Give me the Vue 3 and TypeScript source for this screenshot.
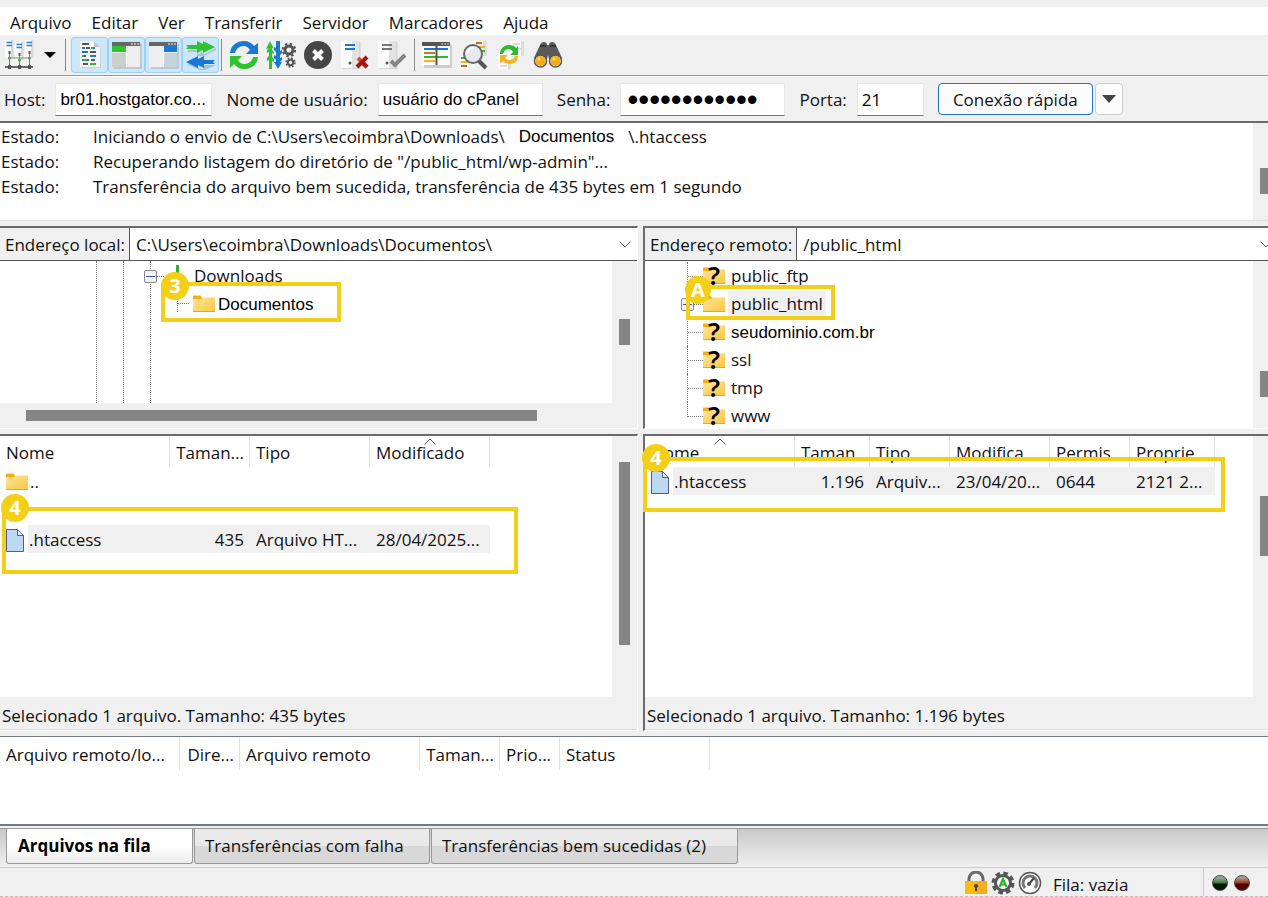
<script setup lang="ts">
import { ref } from 'vue'

interface Column { label: string; width: number; align?: 'right'; sorted?: boolean }
interface FileRow { kind: 'folder' | 'file' | 'gap'; cells: string[] }

const menus = ['Arquivo', 'Editar', 'Ver', 'Transferir', 'Servidor', 'Marcadores', 'Ajuda']

const host = ref('br01.hostgator.co...')
const user = ref('usuário do cPanel')
const password = ref('abcdefghijkl')
const port = ref('21')

const localPath = ref('C:\\Users\\ecoimbra\\Downloads\\Documentos\\')
const remotePath = ref('/public_html')

const localColumns: Column[] = [
  { label: 'Nome', width: 170 },
  { label: 'Taman...', width: 80, align: 'right' },
  { label: 'Tipo', width: 120 },
  { label: 'Modificado', width: 120, sorted: true },
]
const localRows: FileRow[] = [
  { kind: 'folder', cells: ['..', '', '', ''] },
  { kind: 'gap', cells: [] },
  { kind: 'file', cells: ['.htaccess', '435', 'Arquivo HT...', '28/04/2025...'] },
]
const remoteColumns: Column[] = [
  { label: 'Nome', width: 150, sorted: true },
  { label: 'Taman', width: 75 },
  { label: 'Tipo', width: 80 },
  { label: 'Modifica', width: 100 },
  { label: 'Permis', width: 80 },
  { label: 'Proprie', width: 85 },
]
const remoteRow = ['.htaccess', '1.196', 'Arquiv...', '23/04/20...', '0644', '2121 2...']

const remoteFolders = [
  { name: 'public_ftp', unknown: true },
  { name: 'public_html', unknown: false },
  { name: 'seudominio.com.br', unknown: true, plain: true },
  { name: 'ssl', unknown: true },
  { name: 'tmp', unknown: true },
  { name: 'www', unknown: true },
]

const queueColumns: Column[] = [
  { label: 'Arquivo remoto/lo...', width: 180 },
  { label: 'Dire...', width: 60, align: 'right' },
  { label: 'Arquivo remoto', width: 180 },
  { label: 'Taman...', width: 80, align: 'right' },
  { label: 'Prio...', width: 60 },
  { label: 'Status', width: 150 },
]
const tabs = [
  { label: 'Arquivos na fila', width: 187 },
  { label: 'Transferências com falha', width: 236 },
  { label: 'Transferências bem sucedidas (2)', width: 307 },
]
const activeTab = ref(0)
const total = (columns: Column[]) => columns.reduce((sum, c) => sum + c.width, 0)
</script>

<template>
  <svg class="defs" aria-hidden="true">
    <defs>
      <linearGradient id="fold" x1="0" y1="0" x2="1" y2="1">
        <stop offset="0" stop-color="#ffe49a" /><stop offset="1" stop-color="#fbc840" />
      </linearGradient>
      <symbol id="folder" viewBox="0 0 22 18">
        <path d="M0 1.500Q0 .5 1 .5H7.500L9 3H21V10H0z" fill="#f6ae10" />
        <path d="M0 4H8L10 2.500H22V16.500H0z" fill="url(#fold)" />
        <path d="M0 16.500H22" stroke="#e2a62c" />
      </symbol>
      <symbol id="file" viewBox="0 0 18 23">
        <path d="M.5 .5H11.500L17.500 6.500V22.500H.5z" fill="#bcd9f1" stroke="#57598c" />
        <path d="M11.500 .5V6.500H17.500z" fill="#e6f1fb" stroke="#57598c" />
      </symbol>
      <symbol id="chevron" viewBox="0 0 12 7">
        <path d="M.5 .5L6 6L11.500 .5" fill="none" stroke="#555" />
      </symbol>
      <symbol id="sheet" viewBox="0 0 20 28">
        <path d="M0 0H18V27H0z" fill="#fafafa" /><path d="M11 0H18V27H11z" fill="#e2e2e2" />
        <path d="M18 1H19.500V28H1V27H18z" fill="#d4d4d4" />
      </symbol>
    </defs>
  </svg>

  <main class="app">
    <div class="top-edge"></div>
    <nav class="menu">
      <button v-for="m in menus" :key="m" type="button">{{ m }}</button>
    </nav>

    <div class="toolbar">
      <button class="tool" type="button" aria-label="Gerenciador de sites">
        <svg width="30" height="30" viewBox="0 0 30 30">
          <g v-for="x in [0, 10, 20]" :key="x" :transform="`translate(${x} ${x === 10 ? 2 : 0})`">
            <path d="M0 0H6V18H0z" fill="#fafafa" /><path d="M6 0H8.500V18H6z" fill="#d8d8d8" />
            <path d="M1.500 2.500H7M1.500 5.500H7" stroke="#2a80d0" stroke-width="1.500" />
            <path d="M4.500 11V14" stroke="#555" stroke-width="2" />
            <path d="M4.500 14V27" stroke="#777" />
            <circle cx="4.500" cy="18" r="1.500" fill="#48a048" />
          </g>
          <path d="M3 18H26" stroke="#888" /><path d="M0 27H28" stroke="#666" stroke-width="2" />
          <path d="M3 25H6V29H3zM13 25H16V29H13zM23 25H26V29H23z" fill="#555" />
        </svg>
      </button>
      <button class="drop" type="button" aria-label="Abrir lista de sites">
        <svg width="12" height="6" viewBox="0 0 12 6"><path d="M0 0H12L6 6z" /></svg>
      </button>
      <span class="sep"></span>
      <button class="tool on" type="button" aria-label="Registro de mensagens">
        <svg width="24" height="28" viewBox="0 0 24 28">
          <path d="M4 2L18 1L23 7V27H4z" fill="#c9d3d8" /><path d="M2 0H16L22 6V26H2z" fill="#f4f4f4" />
          <path d="M16 0V6H22z" fill="#c4c4c4" />
          <g stroke-width="2">
            <path d="M4 3H11M8 7H12M12 11H18M4 15H8M13 19H17M5 23H10" stroke="#555" />
            <path d="M4 7H7M14 7H17M4 11H10M12 15H18M4 19H11" stroke="#2377c8" />
            <path d="M13 7H15M5 19H9M12 23H18M4 15H6" stroke="#35b335" />
          </g>
        </svg>
      </button>
      <button class="tool on" type="button" aria-label="Árvore local">
        <svg width="30" height="28" viewBox="0 0 30 28">
          <path d="M2 3H30V28H2z" fill="#bac9d2" /><path d="M0 1H28V26H0z" fill="#eee" />
          <path d="M0 1H28V5H0z" fill="#666" /><path d="M19 3H21M22 3H24M25 3H27" stroke="#fff" />
          <path d="M0 5H14V11H0z" fill="#2fc32f" /><path d="M0 12H14V26H0z" fill="#ccd0cb" />
          <path d="M14.500 5V26" stroke="#fff" />
        </svg>
      </button>
      <button class="tool on" type="button" aria-label="Árvore remota">
        <svg width="30" height="28" viewBox="0 0 30 28">
          <path d="M2 3H30V28H2z" fill="#bac9d2" /><path d="M0 1H28V26H0z" fill="#eee" />
          <path d="M0 1H28V5H0z" fill="#666" /><path d="M19 3H21M22 3H24M25 3H27" stroke="#fff" />
          <path d="M15 5H28V11H15z" fill="#1978d4" /><path d="M15 12H28V26H15z" fill="#c6d3da" />
          <path d="M14.500 5V26" stroke="#fff" />
        </svg>
      </button>
      <button class="tool on" type="button" aria-label="Fila de transferência">
        <svg width="30" height="30" viewBox="0 0 30 30">
          <path d="M2 10H12V14.500L16 12L18 14.500L30 8V10L18 16L11 16V12H2zM30 25H17V29.500L2 23V25L17 31z" fill="#a9c0d0" />
          <path d="M0 5H11V1L17 4V1L29 7L17 13V10L11 13V9H0L2 7z" fill="#2fc32f" />
          <path d="M29 20H18V16L12 19V16L0 22L12 28V25L18 28V24H29L27 22z" fill="#1978d4" />
        </svg>
      </button>
      <span class="sep slim"></span>
      <button class="tool" type="button" aria-label="Atualizar">
        <svg width="30" height="30" viewBox="0 0 30 30">
          <path d="M1 13C2 5 8 1 15 1C19 1 23 3 25 6L29 3V14H17L21 10C19 7 17 6 15 6C10 6 7 9 6 13z" fill="#1978d4" />
          <path d="M29 17C28 25 22 29 15 29C11 29 7 27 5 24L1 28V16H13L9 20C11 23 13 24 15 24C20 24 23 21 24 17z" fill="#2fc32f" />
        </svg>
      </button>
      <button class="tool" type="button" aria-label="Processar fila">
        <svg width="30" height="30" viewBox="0 0 30 30">
          <path d="M3 29V20L1 21V18L3 16V12L1 13V10L3 8L0 9L4 1L8 9L6 8V10L8 12V14L6 13V17L8 19V22L6 21V29z" fill="#2fc32f" />
          <path d="M10 1H14V11L16 10V13L14 15V18L16 17V20L14 22H16L12 29L8 22H10V20L8 18V15L10 16V12L8 10V7L10 8z" fill="#1978d4" />
          <g fill="none" stroke="#555">
            <circle cx="23" cy="10" r="4" stroke-width="3" />
            <circle cx="23" cy="10" r="6.200" stroke-width="2.200" stroke-dasharray="2.400 2.470" />
            <circle cx="24.500" cy="22.500" r="2.700" stroke-width="2" />
            <circle cx="24.500" cy="22.500" r="4.300" stroke-width="1.800" stroke-dasharray="1.700 1.680" />
          </g>
        </svg>
      </button>
      <button class="tool" type="button" aria-label="Cancelar">
        <svg width="30" height="30" viewBox="0 0 30 30">
          <circle cx="15" cy="15" r="14" fill="#464646" />
          <path d="M10.500 10.500L19.500 19.500M19.500 10.500L10.500 19.500" stroke="#fff" stroke-width="4" />
        </svg>
      </button>
      <button class="tool" type="button" aria-label="Desconectar">
        <svg width="30" height="30" viewBox="0 0 30 30">
          <use href="#sheet" x="1" y="1" width="20" height="28" />
          <path d="M5 5H15M5 9H15" stroke="#1978d4" stroke-width="2" /><circle cx="10" cy="23" r="1.500" fill="#555" />
          <path d="M18 18L27 27" stroke="#e04b18" stroke-width="4" /><path d="M27 17L17 27M23 23L27 27" stroke="#a51212" stroke-width="4" />
        </svg>
      </button>
      <button class="tool" type="button" aria-label="Reconectar">
        <svg width="30" height="30" viewBox="0 0 30 30">
          <use href="#sheet" x="1" y="1" width="20" height="28" />
          <path d="M5 5H15M5 9H15" stroke="#777" stroke-width="2" /><circle cx="10" cy="23" r="1.500" fill="#555" />
          <path d="M14 21L18 25L28 15" fill="none" stroke="#858585" stroke-width="4" />
        </svg>
      </button>
      <span class="sep mid"></span>
      <button class="tool" type="button" aria-label="Comparar diretórios">
        <svg width="30" height="26" viewBox="0 0 30 26">
          <path d="M2 3H30V26H2z" fill="#ccc" /><path d="M0 0H28V23H0z" fill="#fafafa" />
          <path d="M0 0H28V4H0z" fill="#555" /><path d="M19 2H21M22 2H24M25 2H27" stroke="#ddd" />
          <g stroke-width="2">
            <path d="M2 7H26" stroke="#1978d4" /><path d="M2 11H13" stroke="#c87730" />
            <path d="M2 15H26" stroke="#2fb92f" /><path d="M2 19H13" stroke="#f3b51b" />
          </g>
          <path d="M14.500 4V23" stroke="#555" stroke-width="2" />
        </svg>
      </button>
      <button class="tool" type="button" aria-label="Filtros">
        <svg width="30" height="30" viewBox="0 0 30 30">
          <path d="M12 1H26V16H12zM2 14H16V29H2z" fill="#fafafa" /><path d="M24 1H28V16H24z" fill="#ddd" />
          <g stroke-width="2">
            <path d="M17 3H23M2 26H8" stroke="#c8682c" /><path d="M19 7H26M2 22H12" stroke="#f3b51b" />
            <path d="M20 11H26M2 18H7" stroke="#2fb92f" />
          </g>
          <path d="M20 21L27 28" stroke="#555" stroke-width="4" />
          <circle cx="14" cy="14" r="9" fill="#e6eaee" stroke="#686868" stroke-width="2" />
          <path d="M8 13C9 9 12 8 15 8" fill="none" stroke="#fff" stroke-width="2" />
        </svg>
      </button>
      <button class="tool" type="button" aria-label="Navegação sincronizada">
        <svg width="30" height="30" viewBox="0 0 30 30">
          <path d="M14 1H26V16H14zM2 13H15V29H2z" fill="#fcfcfc" /><path d="M25 1H28V16H25zM12 22H15V29H12z" fill="#ddd" />
          <path d="M17 4H24M21 9H25M4 22H11M4 26H11" stroke="#bbb" />
          <path d="M4 14C4 8 9 5 13 5C16 5 19 6 20 8L22 6V15H14L17 12C15 9 13 9 12 9C9 9 8 12 7 14z" fill="#2fb92f" />
          <path d="M22 16C22 21 18 24 14 24C11 24 8 23 7 21L4 23V15H12L9 18C11 20 13 20 14 20C17 20 18 18 19 16z" fill="#f3b51b" />
        </svg>
      </button>
      <button class="tool" type="button" aria-label="Procurar arquivos">
        <svg width="30" height="28" viewBox="0 0 30 28">
          <path d="M1 17L7 4Q8 1 11 1Q14 1 14 4H16Q16 1 19 1Q22 1 23 4L29 17V22H17L15 14L13 22H1z" fill="#5a5a5a" />
          <path d="M7 5H13M17 5H23" stroke="#393939" stroke-width="2" />
          <circle cx="7.500" cy="20" r="6" fill="#fff" stroke="#555" stroke-width="1.500" /><circle cx="22.500" cy="20" r="6" fill="#fff" stroke="#555" stroke-width="1.500" />
          <circle cx="7.500" cy="20" r="5" fill="#fba914" /><circle cx="22.500" cy="20" r="5" fill="#fba914" />
          <circle cx="6" cy="18" r="1.500" fill="#ffe069" /><circle cx="21" cy="18" r="1.500" fill="#ffe069" />
        </svg>
      </button>
    </div>

    <form class="quick" @submit.prevent>
      <label for="host">Host:</label>
      <input id="host" v-model="host" class="w-host" type="text" />
      <label for="user">Nome de usuário:</label>
      <input id="user" v-model="user" class="w-user" type="text" />
      <label for="password">Senha:</label>
      <input id="password" v-model="password" class="w-user dots" type="password" />
      <label for="port">Porta:</label>
      <input id="port" v-model="port" class="w-port ui" type="text" />
      <button class="connect" type="submit">Conexão rápida</button>
      <button class="connect-drop" type="button" aria-label="Conexões recentes">
        <svg width="14" height="8" viewBox="0 0 14 8"><path d="M0 0H14L7 8z" fill="#444" /></svg>
      </button>
    </form>

    <section class="log">
      <dl>
        <dt>Estado:</dt>
        <dd class="split-line"><span>Iniciando o envio de C:\Users\ecoimbra\Downloads\</span><span class="arial">Documentos</span><span>\.htaccess</span></dd>
        <dt>Estado:</dt>
        <dd>Recuperando listagem do diretório de "/public_html/wp-admin"...</dd>
        <dt>Estado:</dt>
        <dd>Transferência do arquivo bem sucedida, transferência de 435 bytes em 1 segundo</dd>
      </dl>
      <div class="track edge"><i class="log-thumb"></i></div>
    </section>

    <div class="columns trees">
      <section class="pane">
        <div class="address">
          <label for="local">Endereço local:</label>
          <div class="combo">
            <select id="local" v-model="localPath"><option>{{ localPath }}</option></select>
            <svg width="12" height="7"><use href="#chevron" /></svg>
          </div>
        </div>
        <div class="pane-body">
          <div class="tree local-tree">
            <div class="guides"><i></i><i></i><i></i></div>
            <div class="node">
              <span class="expander"></span><span class="stub"></span>
              <span class="download"></span><span>Downloads</span>
            </div>
            <div class="node child">
              <span class="stub tall"></span>
              <svg width="22" height="18"><use href="#folder" /></svg><span class="arial">Documentos</span>
            </div>
            <div class="mark mark-local-tree"><b>3</b></div>
          </div>
          <div class="track"><i class="tree-thumb"></i></div>
        </div>
        <div class="h-track"><i></i></div>
      </section>

      <section class="pane remote">
        <div class="address">
          <label for="remote">Endereço remoto:</label>
          <div class="combo cut">
            <select id="remote" v-model="remotePath"><option>{{ remotePath }}</option></select>
            <svg width="12" height="7"><use href="#chevron" /></svg>
          </div>
        </div>
        <div class="pane-body">
          <div class="tree remote-tree">
            <div v-for="f in remoteFolders" :key="f.name" class="node">
              <span class="branch"><span v-if="!f.unknown" class="expander"></span></span>
              <span class="folder-icon">
                <svg width="22" height="18"><use href="#folder" /></svg>
                <b v-if="f.unknown">?</b>
              </span>
              <span :class="{ arial: f.plain, picked: !f.unknown, name: true }">{{ f.name }}</span>
            </div>
            <div class="mark mark-remote-tree"><b>A</b></div>
          </div>
          <div class="track edge"><i class="remote-tree-thumb"></i></div>
        </div>
      </section>
    </div>

    <div class="columns lists">
      <section class="pane">
        <div class="pane-body">
          <div class="list">
            <table :style="{ width: total(localColumns) + 'px' }">
              <thead>
                <tr>
                  <th v-for="c in localColumns" :key="c.label" scope="col" :class="c.align" :style="{ width: c.width + 'px' }">
                    {{ c.label }}<svg v-if="c.sorted" class="sort" width="12" height="7"><use href="#chevron" /></svg>
                  </th>
                </tr>
              </thead>
              <tbody>
                <tr v-for="(r, i) in localRows" :key="i" :class="r.kind">
                  <td v-if="r.kind === 'gap'" colspan="4"></td>
                  <td v-for="(c, j) in r.cells" :key="j" :class="{ first: j === 0, right: j === 1 }">
                    <span v-if="j === 0" class="entry">
                      <svg v-if="r.kind === 'folder'" width="22" height="18"><use href="#folder" /></svg>
                      <svg v-else width="18" height="23"><use href="#file" /></svg>
                      <span>{{ c }}</span>
                    </span>
                    <template v-else>{{ c }}</template>
                  </td>
                </tr>
              </tbody>
            </table>
            <div class="mark mark-local-list"><b>4</b></div>
          </div>
          <div class="track"><i class="list-thumb"></i></div>
        </div>
        <p class="summary">Selecionado 1 arquivo. Tamanho: 435 bytes</p>
      </section>

      <section class="pane remote">
        <div class="pane-body">
          <div class="list">
            <table :style="{ width: total(remoteColumns) + 'px' }">
              <thead>
                <tr>
                  <th v-for="c in remoteColumns" :key="c.label" scope="col" :style="{ width: c.width + 'px' }">
                    {{ c.label }}<svg v-if="c.sorted" class="sort" width="12" height="7"><use href="#chevron" /></svg>
                  </th>
                </tr>
              </thead>
              <tbody>
                <tr class="file">
                  <td v-for="(c, j) in remoteRow" :key="j" :class="{ first: j === 0, right: j === 1 }">
                    <span v-if="j === 0" class="entry"><svg width="18" height="23"><use href="#file" /></svg><span>{{ c }}</span></span>
                    <template v-else>{{ c }}</template>
                  </td>
                </tr>
              </tbody>
            </table>
            <div class="mark mark-remote-list"><b>4</b></div>
          </div>
          <div class="track edge"><i class="remote-list-thumb"></i></div>
        </div>
        <p class="summary">Selecionado 1 arquivo. Tamanho: 1.196 bytes</p>
      </section>
    </div>

    <section class="queue">
      <table :style="{ width: total(queueColumns) + 'px' }">
        <thead>
          <tr>
            <th v-for="c in queueColumns" :key="c.label" scope="col" :class="c.align" :style="{ width: c.width + 'px' }">{{ c.label }}</th>
          </tr>
        </thead>
      </table>
    </section>

    <div class="tabs" role="tablist">
      <button
        v-for="(t, i) in tabs" :key="t.label" type="button" role="tab"
        :aria-selected="i === activeTab" :class="{ active: i === activeTab }"
        :style="{ width: t.width + 'px' }" @click="activeTab = i"
      >{{ t.label }}</button>
    </div>

    <footer class="status">
      <svg width="24" height="24" viewBox="0 0 24 24">
        <path d="M5 12V8A7 7 0 0 1 19 8V12" fill="none" stroke="#6b6b6b" stroke-width="3" />
        <path d="M1 10H23V23H1z" fill="#f0ae20" /><path d="M1 10H12V23H1z" fill="#fdbd10" />
        <circle cx="12" cy="15" r="2" fill="#444" /><path d="M11 15H13V20H11z" fill="#444" />
      </svg>
      <svg width="24" height="24" viewBox="0 0 24 24">
        <circle cx="12" cy="12" r="9.500" fill="none" stroke="#555" stroke-width="4" stroke-dasharray="4.400 3.060" />
        <circle cx="12" cy="12" r="7.500" fill="#fff" stroke="#555" stroke-width="3" />
        <path d="M8.500 16L12 8L15.500 16M10 13.500H14" fill="none" stroke="#29b729" stroke-width="2.200" />
      </svg>
      <svg width="24" height="24" viewBox="0 0 24 24">
        <circle cx="12" cy="12" r="10.500" fill="#fff" stroke="#555" stroke-width="1.500" />
        <path d="M7 17A7 7 0 1 1 17 17" fill="none" stroke="#777" stroke-width="3" />
        <path d="M11 13L16 7" stroke="#444" stroke-width="2" /><circle cx="11" cy="13" r="2" fill="#555" />
      </svg>
      <span class="queue-state">Fila: vazia</span>
      <span class="led green"></span>
      <span class="led red"></span>
    </footer>
  </main>
</template>

<style>
body { margin: 0; background: #f0f0f0; }
</style>

<style scoped>
.app {
  display: flex; flex-direction: column; min-height: 100vh; overflow: hidden;
  background: #f0f0f0; color: #111; font: 17px/24px "Open Sans", "Noto Sans", sans-serif;
}
.app *, .app { box-sizing: border-box; }
.defs { position: absolute; width: 0; height: 0; }
button, input, select { font: inherit; color: inherit; margin: 0; }
button { border: 0; background: none; padding: 0; white-space: nowrap; }
svg { display: block; flex: none; }
.arial { font-family: "Liberation Sans", Arial, sans-serif; color: #000; }

.top-edge { height: 7px; }
.menu { display: flex; gap: 20px; height: 28px; padding: 4px 10px 0; background: #fff; }
.menu button { height: 24px; }

.toolbar { display: flex; align-items: center; height: 41px; padding-left: 1px; border-bottom: 1px solid #999; }
.tool { display: grid; place-items: center; width: 37px; height: 36px; }
.tool.on { border: 1px solid #9ad1f5; border-radius: 3px; background: #cce6fa; }
.drop { width: 23px; height: 36px; display: grid; place-items: center; }
.sep { width: 1px; height: 32px; margin: 0 5px 0 4px; background: #8c8c8c; }
.sep.slim { margin: 0 3px 0 2px; }
.sep.mid { margin: 0 3px 0 4px; }

.quick { display: flex; align-items: center; height: 47px; padding-left: 4px; border-top: 1px solid #fff; border-bottom: 2px solid #6b6b6f; white-space: nowrap; }
.quick label, .connect { padding-top: 1px; }
.quick input {
  height: 33px; margin: 0 14px 0 10px; padding: 1px 4px 0; border: 1px solid #e8e8e8; border-bottom-color: #777;
  background: #fff; font: 17px "Liberation Sans", Arial, sans-serif; color: #000; border-radius: 0;
}
.quick .w-host { width: 157px; }
.quick .w-user { width: 165px; }
.quick .w-port { width: 67px; }
.quick .ui { font-family: "Open Sans", sans-serif; }
.quick .dots { font-size: 31px; padding-left: 6px; }
.connect { width: 155px; height: 32px; border: 1px solid #2272c3; border-radius: 4px; background: #fcfcfc; }
.connect-drop { display: grid; place-items: center; width: 28px; height: 32px; margin-left: 2px; border: 1px solid #ccc; border-radius: 4px; background: #fcfcfc; }

.log { display: flex; flex: 98 0 98px; border-bottom: 1px solid #ddd; background: #fff; }
.log dl { display: grid; grid-template-columns: 92px minmax(0, 1fr); grid-auto-rows: 25px; flex: 1; margin: 0; padding: 1px 0 0 1px; line-height: 25px; white-space: nowrap; }
.log dd { margin: 0; }
.split-line { display: flex; gap: 14px; }

.track { position: relative; flex: none; width: 25px; background: #f0f0f0; }
.track.edge { width: 15px; }
.track i { position: absolute; right: 7px; width: 11px; background: #858585; }
.track.edge i { right: 0; width: 8px; }
.log-thumb { top: 46%; height: 26px; }
.tree-thumb { top: 41%; height: 26px; }
.remote-tree-thumb { top: 66%; height: 26px; }
.list-thumb { top: 10%; height: 70%; }
.remote-list-thumb { top: 23%; height: 23%; }

.columns { display: grid; grid-template-columns: minmax(0, 638fr) minmax(0, 624fr); gap: 6px; margin-top: 5px; }
.trees { flex: 203 0 203px; }
.lists { flex: 297 0 297px; }
.pane { display: flex; flex-direction: column; min-width: 0; border-top: 2px solid #6b6b6f; border-right: 1px solid #fff; border-bottom: 1px solid #fff; }
.remote { border-left: 2px solid #6b6b6f; border-right: 0; margin-left: -1px; }
.pane-body { display: flex; flex: 1; background: #fff; }

.address { display: flex; height: 33px; border-bottom: 1px solid #555; }
.address label { padding: 5px 4px 0 5px; border-right: 1px solid #555; white-space: nowrap; }
.combo { position: relative; flex: 1; min-width: 0; background: #fff; }
.combo select { width: 100%; height: 32px; padding: 1px 30px 0 6px; border: 0; border-radius: 0; appearance: none; background: none; }
.combo svg { position: absolute; right: 6px; top: 13px; pointer-events: none; }
.combo.cut svg { right: -4px; }

.tree { position: relative; flex: 1; min-width: 0; padding-top: 1px; }
.node { display: flex; align-items: center; height: 28px; white-space: nowrap; }
.node .arial { padding-top: 2px; }
.guides { position: absolute; inset: 0 auto 0 96px; display: flex; }
.guides i { width: 27px; border-left: 1px dotted #777; }
.local-tree .node { padding-left: 144px; }
.local-tree .node.child { padding-left: 177px; gap: 3px; }
.expander { position: relative; flex: none; width: 13px; height: 13px; border: 1px solid #8a8a8a; border-radius: 2px; background: #f3f3f3; }
.expander::after { content: ""; position: absolute; left: 1px; right: 1px; top: 5px; height: 1px; background: #3f55a0; }
.stub { width: 13px; border-top: 1px dotted #777; }
.stub.tall { align-self: flex-start; height: 22px; border-top: 0; border-left: 1px dotted #777; background: repeating-linear-gradient(90deg, #777 0 1px, transparent 1px 2px) 0 13px / 100% 1px no-repeat; }
.download { align-self: flex-start; width: 3px; height: 14px; margin: 3px 15px 0 6px; background: #29b53b; }
.h-track { height: 25px; padding: 7px 100px 0 26px; }
.h-track i { display: block; height: 11px; background: #858585; }

.remote-tree { height: 166px; padding-left: 42px; overflow: visible; }
.branch { display: flex; align-items: center; align-self: stretch; width: 16px; background: repeating-linear-gradient(90deg, #777 0 1px, transparent 1px 2px) 0 14px / 100% 1px no-repeat; border-left: 1px dotted #777; }
.branch .expander { margin-left: -7px; }
.node:nth-child(6) .branch { height: 15px; }
.folder-icon { position: relative; width: 22px; }
.folder-icon b { position: absolute; inset: -6px 0 auto 0; text-align: center; font: 600 26px/28px "Noto Sans", sans-serif; color: #000; }
.name { margin-left: 3px; padding: 0 3px; }
.picked { background: #f0f0f0; line-height: 26px; }

.list { position: relative; flex: 1; min-width: 0; }
table { table-layout: fixed; border-collapse: separate; border-spacing: 0; }
th { position: relative; height: 31px; padding: 2px 5px 0 6px; border-right: 1px solid #e2e2e2; font-weight: 400; text-align: left; white-space: nowrap; }
td { height: 28px; padding: 2px 6px 0 6px; white-space: nowrap; }
.right { text-align: right; }
.gap td { height: 30px; padding: 0; }
.file td { background: #f0f0f0; }
.file td.first { background: linear-gradient(90deg, #fff 28px, #f0f0f0 28px); }
.sort { position: absolute; left: calc(50% - 6px); top: 2px; transform: rotate(180deg); }
.entry { display: flex; align-items: center; gap: 5px; }
.folder .entry { gap: 2px; }
.summary { margin: 0; height: 33px; padding: 7px 2px 0; border-bottom: 1px solid #ddd; white-space: nowrap; }

.mark { position: absolute; border: 4px solid #f3cf17; pointer-events: none; }
.mark b { position: absolute; left: -4px; top: -14px; width: 28px; height: 28px; border-radius: 50%; background: #f3cf17; color: #fff; font-size: 20px; line-height: 27px; text-align: center; }
.mark-local-tree { left: 161px; top: 21px; width: 180px; height: 40px; }
.mark-remote-tree { left: 41px; top: 24px; width: 149px; height: 35px; }
.mark-remote-tree b { left: -5px; top: -13px; width: 26px; height: 28px; }
.mark-local-list { left: 2px; top: 71px; width: 516px; height: 67px; }
.mark-remote-list { left: -2px; top: 21px; width: 582px; height: 55px; }
.mark-local-list b, .mark-remote-list b { left: -5px; top: -17px; }

.td-first, td.first { padding-left: 6px; }

.queue { flex: 90 0 90px; margin-top: 5px; border-top: 1px solid #747a84; border-bottom: 2px solid #747a84; background: #fff; }
.queue th { height: 33px; padding-top: 3px; }

.tabs { display: flex; gap: 1px; height: 40px; margin-top: 2px; padding-left: 6px; border-top: 1px solid #999; border-bottom: 1px solid #ccc; background: linear-gradient(#c9c9c9, #f0f0f0); }
.tabs button { height: 35px; padding: 0 11px 1px 10px; border: 1px solid #999; border-top: 0; border-radius: 0 0 3px 3px; background: linear-gradient(#e9e9e9 50%, #d8d8d8 50%); text-align: left; }
.tabs .active { padding-left: 11px; font-weight: 700; background: linear-gradient(#fff 50%, #ececec); color: #000; }

.status { display: flex; align-items: center; justify-content: flex-end; gap: 3px; height: 29px; padding: 1px 18px 0 0; border-bottom: 1px dashed #bbb; }
.queue-state { align-self: stretch; width: 153px; margin: -1px 5px 0 6px; padding: 5px 0 0 2px; border-right: 1px solid #ccc; }
.led { width: 16px; height: 16px; margin-right: 3px; border: 1px solid #444; border-radius: 50%; }
.led:last-child { margin-right: 0; }
.green { background: linear-gradient(#aaa 5%, #438448 45%, #001700 60%); }
.red { background: linear-gradient(#aaa 5%, #a5482c 45%, #500000 60%); }
</style>
